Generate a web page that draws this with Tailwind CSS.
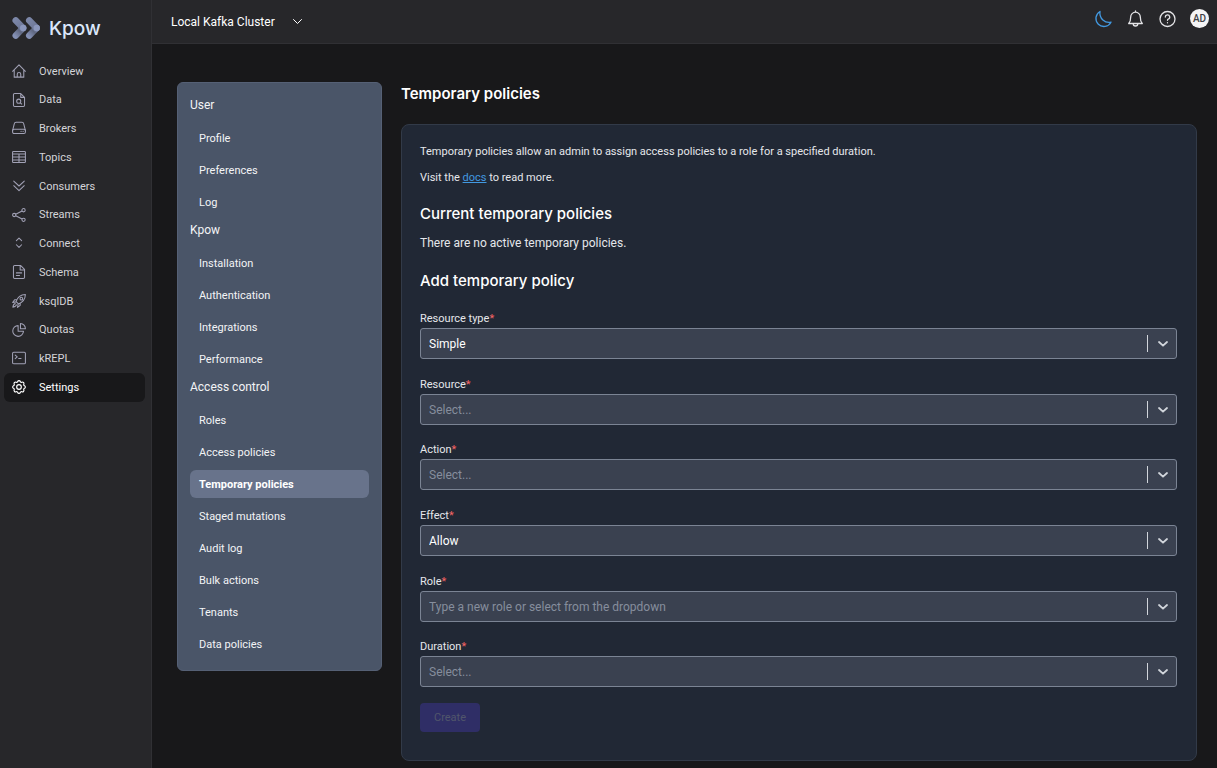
<!DOCTYPE html>
<html lang="en">
<head>
    <meta charset="UTF-8">
    <meta name="viewport" content="width=device-width, initial-scale=1.0">
    <title>Kpow - Temporary policies</title>
    <script src="https://cdn.jsdelivr.net/npm/@tailwindcss/browser@4"></script>
</head>

<body class="flex min-h-screen bg-[#18181a] font-['Roboto',sans-serif] text-[11px] text-gray-200">
    <!-- Sidebar -->
    <aside class="w-[152px] shrink-0 border-r border-[#303034] bg-[#27272a]">
        <a href="#" class="flex h-[56px] items-center gap-2 pl-3 font-['Inter',sans-serif] text-[19px] font-medium text-[#dbe7fb]">
            <svg class="h-[24px] w-[29px]" viewBox="0 0 29 24" fill="none" stroke-width="6.600" stroke-linecap="round">
                <defs>
                    <linearGradient id="down" gradientUnits="userSpaceOnUse" x1="3" y1="3" x2="11" y2="12">
                        <stop stop-color="#7c87a8" />
                        <stop offset="1" stop-color="#6c7696" />
                    </linearGradient>
                    <linearGradient id="up" gradientUnits="userSpaceOnUse" x1="11" y1="12" x2="3" y2="20">
                        <stop stop-color="#7d88ab" />
                        <stop offset=".4" stop-color="#5f6780" />
                        <stop offset="1" stop-color="#8490b4" />
                    </linearGradient>
                    <g id="chevron">
                        <path stroke="url(#up)" d="M11 12l-7.200 7.500" />
                        <path stroke="url(#down)" d="M3.800 4.500 11 12" />
                        <circle cx="11.200" cy="12" r="3.200" fill="#8b97bc" />
                    </g>
                </defs>
                <use href="#chevron" />
                <use href="#chevron" x="13.500" />
            </svg>
            <span class="pt-[2px]">Kpow</span>
        </a>
        <nav class="mt-px grid h-[345px] auto-rows-fr pr-[6px] pl-1 text-[#d4d4d8]">
            <a href="#" class="flex items-center gap-[13px] rounded-md pt-px pl-2">
                <svg class="mb-[2px] size-[14px] text-[#a1a1b5]" viewBox="0 0 24 24" fill="none" stroke="currentColor" stroke-width="1.8" stroke-linecap="round" stroke-linejoin="round"><path d="M1 12.500 12 1.500l11 11M3.800 10v12.500h16.400V10M9 22.500v-5a3 3 0 0 1 6 0v5" /></svg>
                Overview
            </a>
            <a href="#" class="flex items-center gap-[13px] rounded-md pt-px pl-2">
                <svg class="mb-[2px] size-[14px] text-[#a1a1b5]" viewBox="0 0 24 24" fill="none" stroke="currentColor" stroke-width="1.8" stroke-linejoin="round"><path d="M15 1H4.500A2 2 0 0 0 2.500 3v18a2 2 0 0 0 2 2h15a2 2 0 0 0 2-2V7.500zM15 1v6.500h6.500" /><circle cx="11.500" cy="14" r="3.500" /><path d="m14 16.500 3 3" /></svg>
                Data
            </a>
            <a href="#" class="flex items-center gap-[13px] rounded-md pt-px pl-2">
                <svg class="mb-[2px] size-[14px] text-[#a1a1b5]" viewBox="0 0 24 24" fill="none" stroke="currentColor" stroke-width="1.8" stroke-linecap="round" stroke-linejoin="round"><path d="M1 16.500 4 4.500a3 3 0 0 1 3-2.500h10a3 3 0 0 1 3 2.500l3 12" /><rect x="1" y="14" width="22" height="7.500" rx="2.500" /><path d="M15.500 17.800h.1M19 17.800h.1" /></svg>
                Brokers
            </a>
            <a href="#" class="flex items-center gap-[13px] rounded-md pt-px pl-2">
                <svg class="mb-[2px] size-[14px] text-[#a1a1b5]" viewBox="0 0 24 24" fill="none" stroke="currentColor" stroke-width="1.8"><rect x="1" y="2.500" width="22" height="19" rx="1.500" /><path d="M1 7h22M1 12h22M1 17h22M12 7v14.500" /></svg>
                Topics
            </a>
            <a href="#" class="flex items-center gap-[13px] rounded-md pt-px pl-2">
                <svg class="mb-[2px] size-[14px] text-[#a1a1b5]" viewBox="0 0 24 24" fill="none" stroke="currentColor" stroke-width="1.8" stroke-linecap="round" stroke-linejoin="round"><path d="m3 3.500 9 8.500 9-8.500M3 11.500l9 8.500 9-8.500" /></svg>
                Consumers
            </a>
            <a href="#" class="flex items-center gap-[13px] rounded-md pt-px pl-2">
                <svg class="mb-[2px] size-[14px] text-[#a1a1b5]" viewBox="0 0 24 24" fill="none" stroke="currentColor" stroke-width="1.8"><circle cx="3.800" cy="12" r="2.800" /><circle cx="19.800" cy="3.800" r="2.800" /><circle cx="19.800" cy="20.200" r="2.800" /><path d="m6.400 10.800 10.900-5.700M6.400 13.200l10.900 5.700" /></svg>
                Streams
            </a>
            <a href="#" class="flex items-center gap-[13px] rounded-md pt-px pl-2">
                <svg class="mb-[2px] size-[14px] text-[#a1a1b5]" viewBox="0 0 24 24" fill="none" stroke="currentColor" stroke-width="1.8" stroke-linecap="round" stroke-linejoin="round"><path d="m7.500 8 4.500-4.500L16.500 8M7.500 15l4.500 4.500 4.500-4.500" /></svg>
                Connect
            </a>
            <a href="#" class="flex items-center gap-[13px] rounded-md pt-px pl-2">
                <svg class="mb-[2px] size-[14px] text-[#a1a1b5]" viewBox="0 0 24 24" fill="none" stroke="currentColor" stroke-width="1.8" stroke-linecap="round" stroke-linejoin="round"><path d="M15 1H4.500A2 2 0 0 0 2.500 3v18a2 2 0 0 0 2 2h15a2 2 0 0 0 2-2V7.500zM14 1v7.500h7.500M7.500 13.500h9M7.500 18h5.500" /></svg>
                Schema
            </a>
            <a href="#" class="flex items-center gap-[13px] rounded-md pt-px pl-2">
                <svg class="mb-[2px] size-[14px] text-[#a1a1b5]" viewBox="0 0 24 24" fill="none" stroke="currentColor" stroke-width="1.8" stroke-linecap="round" stroke-linejoin="round"><path d="M7 13C9 7 14 1.500 23 1c-.5 9-6 14-12 16zM8.500 10H4.500L1 14.500l6-1M14 15.500v4L9.500 23l1-6M5.500 16.500c-2.500 0-3.500 3-4 6 3-.5 6-1.500 6-4" /><circle cx="16" cy="8" r="2.300" /></svg>
                ksqlDB
            </a>
            <a href="#" class="flex items-center gap-[13px] rounded-md pt-px pl-2">
                <svg class="mb-[2px] size-[14px] text-[#a1a1b5]" viewBox="0 0 24 24" fill="none" stroke="currentColor" stroke-width="1.8" stroke-linejoin="round"><path d="M10.500 4.500a9.200 9.200 0 1 0 9.200 9.500h-9.200z" /><path d="M14.500 1v9H23a8.700 8.700 0 0 0-8.500-9z" /></svg>
                Quotas
            </a>
            <a href="#" class="flex items-center gap-[13px] rounded-md pt-px pl-2">
                <svg class="mb-[2px] size-[14px] text-[#a1a1b5]" viewBox="0 0 24 24" fill="none" stroke="currentColor" stroke-width="1.8" stroke-linecap="round" stroke-linejoin="round"><rect x="1" y="2" width="22" height="20" rx="2" /><path d="m5.500 7 3.500 3-3.500 3M11.500 13h4" /></svg>
                kREPL
            </a>
            <a href="#" class="flex items-center gap-[13px] rounded-md bg-[#18181a] pt-px pl-2 text-white" aria-current="page">
                <svg class="mb-[2px] size-[14px]" viewBox="0 0 24 24" fill="none" stroke="currentColor" stroke-width="2" stroke-linejoin="round"><path d="M9.800 2.500c.6-1.800 3.800-1.800 4.400 0 .4 1.300 1.700 1.800 2.900 1.200 1.700-.9 4 1.400 3.200 3.200-.6 1.200-.1 2.500 1.200 2.900 1.800.6 1.800 3.800 0 4.400-1.300.4-1.800 1.700-1.200 2.900.8 1.800-1.500 4.100-3.200 3.200-1.200-.6-2.500-.1-2.900 1.200-.6 1.800-3.800 1.800-4.400 0-.4-1.300-1.700-1.800-2.900-1.200-1.700.9-4-1.400-3.200-3.200.6-1.200.1-2.500-1.200-2.900-1.800-.6-1.800-3.800 0-4.400 1.300-.4 1.800-1.700 1.200-2.900C2.900 5.100 5.200 2.800 6.900 3.700c1.200.6 2.500.1 2.900-1.200z" /><circle cx="12" cy="12" r="4" /></svg>
                Settings
            </a>
        </nav>
    </aside>

    <div class="flex min-w-0 flex-1 flex-col">
        <!-- Top bar -->
        <header class="flex h-[44px] items-center justify-between border-b border-[#303034] bg-[#27272a] pr-2 pl-[19px]">
            <button type="button" class="flex items-center gap-[17px] text-[12px] text-white">
                Local Kafka Cluster
                <svg class="mb-px size-[11px]" viewBox="0 0 11 11" fill="none" stroke="currentColor" stroke-linecap="round" stroke-linejoin="round"><path d="m1.500 3.500 4 4 4-4" /></svg>
            </button>
            <div class="flex items-center gap-[14px] pb-[6px]">
                <button type="button" aria-label="Toggle theme" class="text-[#4299e1]">
                    <svg class="size-[18px]" viewBox="0 0 18 18" fill="none" stroke="currentColor" stroke-width="1.300" stroke-linejoin="round"><path d="M6 1.500A8 8 0 1 0 17 12.200C11 13.500 5 8.500 6 1.500z" /></svg>
                </button>
                <button type="button" aria-label="Notifications" class="text-[#e4e4e7]">
                    <svg class="size-[18px]" viewBox="0 0 18 18" fill="none" stroke="currentColor" stroke-width="1.300" stroke-linecap="round" stroke-linejoin="round"><path d="M9.500 1v1.200M9.500 2.200A4.800 4.800 0 0 0 4.700 7c0 4-.7 5.200-2 6.500h13.600c-1.300-1.300-2-2.500-2-6.500a4.800 4.800 0 0 0-4.800-4.800zM7.200 13.700a2.300 2.300 0 0 0 4.600 0" /></svg>
                </button>
                <button type="button" aria-label="Help" class="text-[#e4e4e7]">
                    <svg class="size-[18px]" viewBox="0 0 18 18" fill="none" stroke="currentColor" stroke-width="1.300" stroke-linecap="round"><circle cx="9.500" cy="9" r="7.500" /><path d="M7.300 7a2.200 2.200 0 1 1 2.900 2.100c-.5.200-.7.500-.7 1.200M9.500 12.700v.1" /></svg>
                </button>
                <button type="button" aria-label="Account" class="size-[19px] rounded-full bg-[#f4f4f5] text-center text-[10px] leading-[19px] font-medium text-[#3f3f46]">AD</button>
            </div>
        </header>

        <div class="flex flex-1 items-start gap-[19px] pt-[38px] pr-[20px] pb-[7px] pl-[25px]">
            <!-- Settings menu -->
            <nav class="flex w-[205px] shrink-0 flex-col gap-1 rounded-md border border-[#556075] bg-[#4a5568] p-3 leading-[26px] text-gray-100">
                <h2 class="mb-[6px] pt-[2px] text-[12px] leading-[17px]">User</h2>
                <a href="#" class="rounded-md px-[9px] pt-[2px]">Profile</a>
                <a href="#" class="rounded-md px-[9px] pt-[2px]">Preferences</a>
                <a href="#" class="rounded-md px-[9px] pt-[2px]">Log</a>
                <h2 class="mb-[6px] pt-[2px] text-[12px] leading-[17px]">Kpow</h2>
                <a href="#" class="rounded-md px-[9px] pt-[2px]">Installation</a>
                <a href="#" class="rounded-md px-[9px] pt-[2px]">Authentication</a>
                <a href="#" class="rounded-md px-[9px] pt-[2px]">Integrations</a>
                <a href="#" class="rounded-md px-[9px] pt-[2px]">Performance</a>
                <h2 class="mb-[6px] pt-[2px] text-[12px] leading-[17px]">Access control</h2>
                <a href="#" class="rounded-md px-[9px] pt-[2px]">Roles</a>
                <a href="#" class="rounded-md px-[9px] pt-[2px]">Access policies</a>
                <a href="#" class="rounded-md bg-[#68738b] px-[9px] pt-[2px] font-bold text-white" aria-current="page">Temporary policies</a>
                <a href="#" class="rounded-md px-[9px] pt-[2px]">Staged mutations</a>
                <a href="#" class="rounded-md px-[9px] pt-[2px]">Audit log</a>
                <a href="#" class="rounded-md px-[9px] pt-[2px]">Bulk actions</a>
                <a href="#" class="rounded-md px-[9px] pt-[2px]">Tenants</a>
                <a href="#" class="rounded-md px-[9px] pt-[2px]">Data policies</a>
            </nav>

            <main class="min-w-0 flex-1">
                <h1 class="mb-[18px] font-['Inter',sans-serif] text-[15px] leading-[24px] font-semibold text-white">Temporary policies</h1>

                <section class="rounded-lg border border-[#323a48] bg-[#212835] pt-[18px] pr-[19px] pb-[28px] pl-[18px]">
                    <p class="leading-[18px]">Temporary policies allow an admin to assign access policies to a role for a specified duration.</p>
                    <p class="mt-2 leading-[18px]">Visit the <a href="#" class="text-[#4299e1] underline">docs</a> to read more.</p>

                    <h2 class="mt-[17px] font-['Inter',sans-serif] text-[15px] leading-[20px] font-medium text-white">Current temporary policies</h2>
                    <p class="mt-[9px] text-[12px] leading-[20px]">There are no active temporary policies.</p>
                    <h2 class="mt-[18px] font-['Inter',sans-serif] text-[15px] leading-[20px] font-medium text-white">Add temporary policy</h2>

                    <form class="mt-[18px]">
                        <div class="grid h-[394px] auto-rows-fr">
                            <div>
                                <label for="resourceType" class="block leading-[19px]">Resource type<span class="text-[#f56565]">*</span></label>
                                <div class="relative">
                                    <select id="resourceType" class="h-[31px] w-full appearance-none rounded-[3px] border border-[#7b8494] bg-[#3a4150] px-2 pt-px text-[12px] text-white">
                                        <option>Simple</option>
                                    </select>
                                    <svg class="pointer-events-none absolute top-[7px] right-[9px] h-[17px] w-[22px]" viewBox="0 0 22 17" fill="none" stroke="#d1d5db"><path d="M1.500 0v17" /><path stroke-width="1.800" stroke-linecap="round" stroke-linejoin="round" d="m13 7 4 3.700L21 7" /></svg>
                                </div>
                            </div>
                            <div>
                                <label for="resource" class="block leading-[19px]">Resource<span class="text-[#f56565]">*</span></label>
                                <div class="relative">
                                    <select id="resource" class="h-[31px] w-full appearance-none rounded-[3px] border border-[#7b8494] bg-[#3a4150] px-2 pt-px text-[12px] text-[#868e9d]">
                                        <option>Select...</option>
                                    </select>
                                    <svg class="pointer-events-none absolute top-[7px] right-[9px] h-[17px] w-[22px]" viewBox="0 0 22 17" fill="none" stroke="#d1d5db"><path d="M1.500 0v17" /><path stroke-width="1.800" stroke-linecap="round" stroke-linejoin="round" d="m13 7 4 3.700L21 7" /></svg>
                                </div>
                            </div>
                            <div>
                                <label for="action" class="block leading-[19px]">Action<span class="text-[#f56565]">*</span></label>
                                <div class="relative">
                                    <select id="action" class="h-[31px] w-full appearance-none rounded-[3px] border border-[#7b8494] bg-[#3a4150] px-2 pt-px text-[12px] text-[#868e9d]">
                                        <option>Select...</option>
                                    </select>
                                    <svg class="pointer-events-none absolute top-[7px] right-[9px] h-[17px] w-[22px]" viewBox="0 0 22 17" fill="none" stroke="#d1d5db"><path d="M1.500 0v17" /><path stroke-width="1.800" stroke-linecap="round" stroke-linejoin="round" d="m13 7 4 3.700L21 7" /></svg>
                                </div>
                            </div>
                            <div>
                                <label for="effect" class="block leading-[19px]">Effect<span class="text-[#f56565]">*</span></label>
                                <div class="relative">
                                    <select id="effect" class="h-[31px] w-full appearance-none rounded-[3px] border border-[#7b8494] bg-[#3a4150] px-2 pt-px text-[12px] text-white">
                                        <option>Allow</option>
                                    </select>
                                    <svg class="pointer-events-none absolute top-[7px] right-[9px] h-[17px] w-[22px]" viewBox="0 0 22 17" fill="none" stroke="#d1d5db"><path d="M1.500 0v17" /><path stroke-width="1.800" stroke-linecap="round" stroke-linejoin="round" d="m13 7 4 3.700L21 7" /></svg>
                                </div>
                            </div>
                            <div>
                                <label for="role" class="block leading-[19px]">Role<span class="text-[#f56565]">*</span></label>
                                <div class="relative">
                                    <input type="text" id="role" placeholder="Type a new role or select from the dropdown" class="h-[31px] w-full rounded-[3px] border border-[#7b8494] bg-[#3a4150] pt-px pr-10 pl-2 text-[12px] text-white placeholder:text-[#868e9d]">
                                    <svg class="pointer-events-none absolute top-[7px] right-[9px] h-[17px] w-[22px]" viewBox="0 0 22 17" fill="none" stroke="#d1d5db"><path d="M1.500 0v17" /><path stroke-width="1.800" stroke-linecap="round" stroke-linejoin="round" d="m13 7 4 3.700L21 7" /></svg>
                                </div>
                            </div>
                            <div>
                                <label for="duration" class="block leading-[19px]">Duration<span class="text-[#f56565]">*</span></label>
                                <div class="relative">
                                    <select id="duration" class="h-[31px] w-full appearance-none rounded-[3px] border border-[#7b8494] bg-[#3a4150] px-2 pt-px text-[12px] text-[#868e9d]">
                                        <option>Select...</option>
                                    </select>
                                    <svg class="pointer-events-none absolute top-[7px] right-[9px] h-[17px] w-[22px]" viewBox="0 0 22 17" fill="none" stroke="#d1d5db"><path d="M1.500 0v17" /><path stroke-width="1.800" stroke-linecap="round" stroke-linejoin="round" d="m13 7 4 3.700L21 7" /></svg>
                                </div>
                            </div>
                        </div>
                        <button type="submit" disabled class="h-[29px] rounded-[4px] bg-[#2f2e66] px-[14px] pt-[2px] text-[#51566b]">Create</button>
                    </form>
                </section>
            </main>
        </div>
    </div>
</body>
</html>
